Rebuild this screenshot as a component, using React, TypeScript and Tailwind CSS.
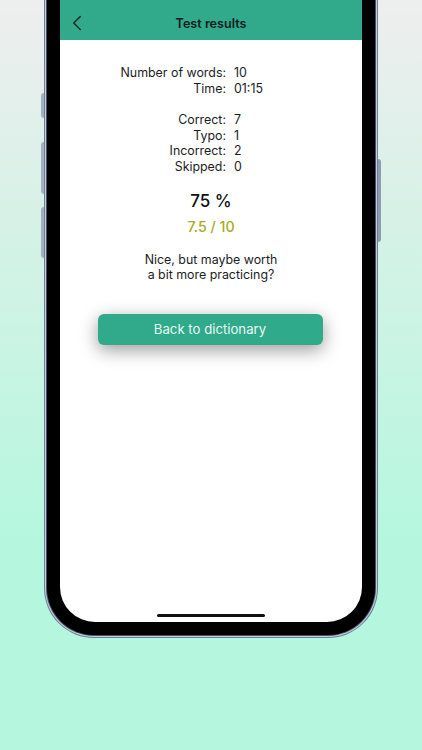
import React from 'react';
import { ChevronLeft } from 'lucide-react';

const statsTop = [
  ['Number of words:', '10'],
  ['Time:', '01:15'],
];

const statsBottom = [
  ['Correct:', '7'],
  ['Typo:', '1'],
  ['Incorrect:', '2'],
  ['Skipped:', '0'],
];

const StatRows = ({ rows }: { rows: string[][] }) => (
  <div className="grid grid-cols-[166px_1fr] gap-x-2 text-[12.4px] leading-[15.6px] text-[#1c1c1e]">
    {rows.map(([label, value]) => (
      <React.Fragment key={label}>
        <div className="text-right">{label}</div>
        <div>{value}</div>
      </React.Fragment>
    ))}
  </div>
);

const App: React.FC = () => {
  return (
    <div
      className="relative h-[750px] w-[422px] overflow-hidden bg-[linear-gradient(180deg,#eeeeee_0%,#b5f7de_72%,#b5f7de_100%)] pl-[44px]"
      style={{ fontFamily: 'Inter, "Liberation Sans", sans-serif' }}
    >
      {/* Side buttons */}
      <div className="absolute left-[41px] top-[93px] h-[25px] w-[3px] rounded-l-sm bg-[#a3b0c2]" />
      <div className="absolute left-[41px] top-[142px] h-[52px] w-[3px] rounded-l-sm bg-[#a3b0c2]" />
      <div className="absolute left-[41px] top-[207px] h-[51px] w-[3px] rounded-l-sm bg-[#a3b0c2]" />
      <div className="absolute left-[378px] top-[159px] h-[83px] w-[3px] rounded-r-sm bg-[#8f9db2]" />

      {/* Phone frame */}
      <div className="mt-[-60px] h-[698px] w-[334px] rounded-[50px] bg-[#6f7f98] p-px">
        <div className="h-full w-full rounded-[49px] bg-[#c3cfe0] p-px">
          <div className="h-full w-full rounded-[48px] bg-[#4a5262] p-px">
            <div className="h-full w-full rounded-[47px] bg-black p-[13px]">
              {/* Screen */}
              <div className="flex h-full w-full flex-col overflow-hidden rounded-[35px] bg-white">
                <div className="flex h-[84px] shrink-0 items-end bg-[#31a98b]">
                  <div className="relative flex h-[41px] w-full items-center justify-center pt-[9px]">
                    <ChevronLeft className="absolute left-[4px] top-[11px] h-[26px] w-[26px] text-[#1c2b27]" strokeWidth={1.4} />
                    <span className="text-[12.6px] font-semibold text-[#10201c]">Test results</span>
                  </div>
                </div>

                <div className="flex flex-1 flex-col pt-[25px]">
                  <StatRows rows={statsTop} />
                  <div className="h-[16px]" />
                  <StatRows rows={statsBottom} />

                  <div className="mt-[14px] text-center text-[17px] font-medium leading-[24px] text-[#111]">75 %</div>
                  <div className="mt-[4px] text-center text-[14.2px] font-medium leading-[20px] text-[#aaaa22]">7.5 / 10</div>
                  <div className="mt-[15px] text-center text-[12.4px] leading-[15.7px] text-[#1c1c1e]">
                    Nice, but maybe worth
                    <br />
                    a bit more practicing?
                  </div>

                  <div className="mt-[31px] flex justify-center pr-[2px]">
                    <button className="h-[31px] w-[225px] rounded-[6px] bg-[#31a98b] text-[13.2px] text-[#e6fbf4] shadow-[0_5px_18px_rgba(0,0,0,0.4)]">
                      Back to dictionary
                    </button>
                  </div>

                  <div className="mt-auto flex justify-center pb-[5px]">
                    <div className="h-[3px] w-[108px] rounded-full bg-[#111]" />
                  </div>
                </div>
              </div>
            </div>
          </div>
        </div>
      </div>
    </div>
  );
};

export default App;
